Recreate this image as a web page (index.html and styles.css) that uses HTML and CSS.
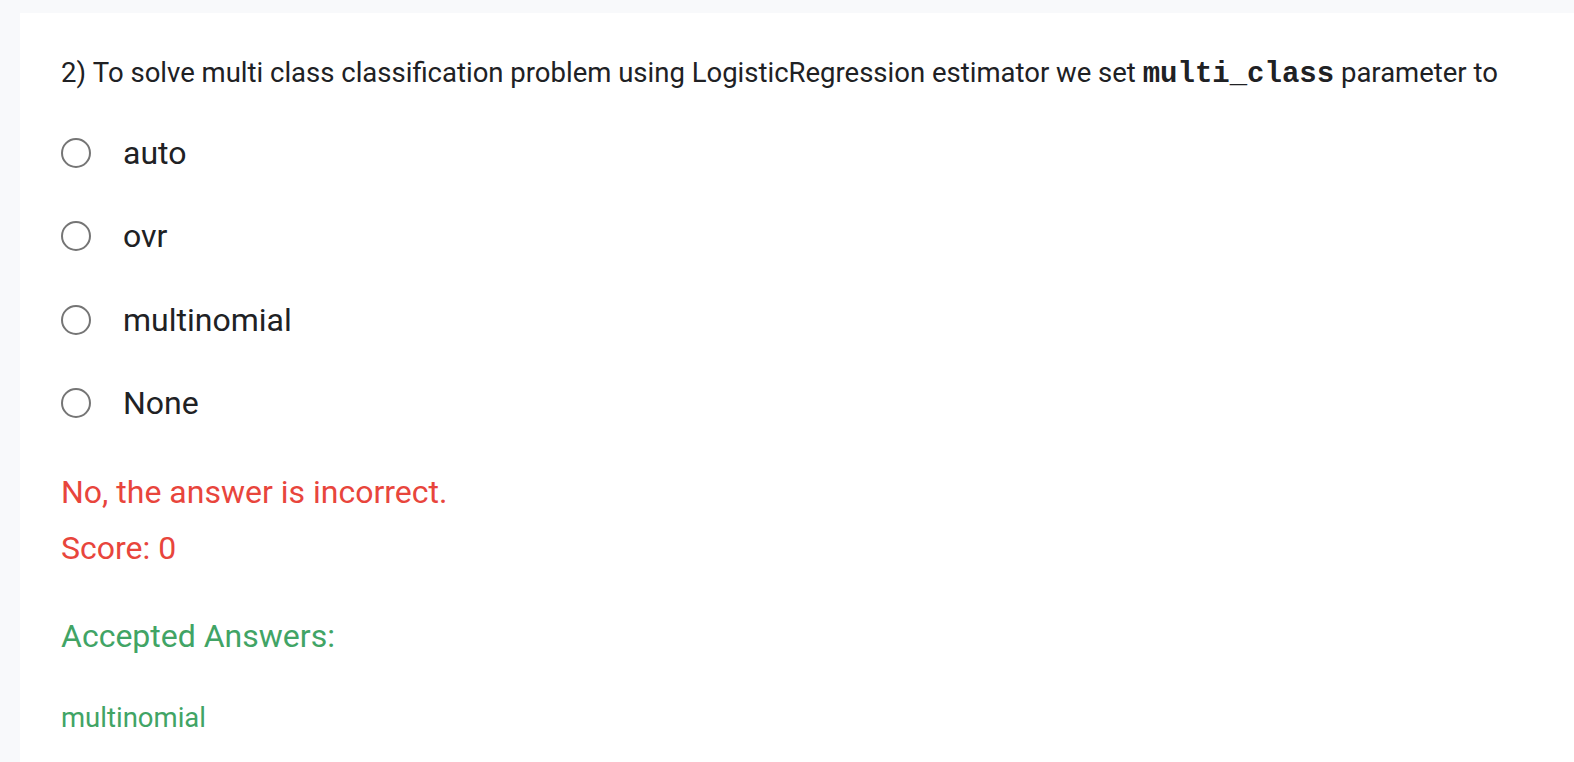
FILE: index.html
```html
<!DOCTYPE html>
<html lang="en">
<head>
<meta charset="utf-8">
<title>Question</title>
<link rel="stylesheet" href="styles.css">
</head>
<body>
<div class="card">
  <p class="question">2)&nbsp;To solve multi class classification problem using LogisticRegression estimator we set <code class="code">multi_class</code> parameter to</p>
  <div class="options">
    <label class="option"><span class="radio"></span><span class="opt-text">auto</span></label>
    <label class="option"><span class="radio"></span><span class="opt-text">ovr</span></label>
    <label class="option"><span class="radio"></span><span class="opt-text">multinomial</span></label>
    <label class="option"><span class="radio"></span><span class="opt-text">None</span></label>
  </div>
  <div class="feedback">
    <div class="wrong">No, the answer is incorrect.</div>
    <div class="score">Score: 0</div>
  </div>
  <div class="accepted">
    <div class="acc-title">Accepted Answers:</div>
    <div class="acc-answer">multinomial</div>
  </div>
</div>
</body>
</html>
```
FILE: styles.css
```css
html, body {
  margin: 0;
  padding: 0;
  background: #f8f9fb;
  height: 100%;
  overflow: hidden;
}
body {
  font-family: Roboto, "Liberation Sans", Arial, sans-serif;
  color: #202124;
}
.card {
  background: #ffffff;
  margin: 13px 0 0 20px;
  padding: 42px 0 0 41px;
  box-sizing: border-box;
  height: calc(100% - 13px);
}
.question {
  margin: 0;
  font-size: 27.5px;
  line-height: 36px;
}
.code {
  font-family: "Liberation Mono", "Courier New", monospace;
  font-weight: bold;
  font-size: 29px;
}
.options {
  display: flex;
  flex-direction: column;
  margin-top: 18.5px;
}
.option {
  display: flex;
  align-items: center;
  height: 83.3px;
  font-size: 32px;
}
.radio {
  width: 26px;
  height: 26px;
  border: 2px solid #757575;
  border-radius: 50%;
  box-sizing: content-box;
  flex: none;
}
.opt-text {
  margin-left: 32px;
}
.feedback {
  margin-top: 19.5px;
  color: #e8453c;
  font-size: 32px;
}
.wrong {
  line-height: 56px;
}
.score {
  line-height: 56px;
}
.accepted {
  color: #41a465;
  margin-top: 32px;
}
.acc-title {
  font-size: 32px;
  line-height: 56px;
}
.acc-answer {
  font-size: 27.5px;
  line-height: 40px;
  margin-top: 34px;
}
```
